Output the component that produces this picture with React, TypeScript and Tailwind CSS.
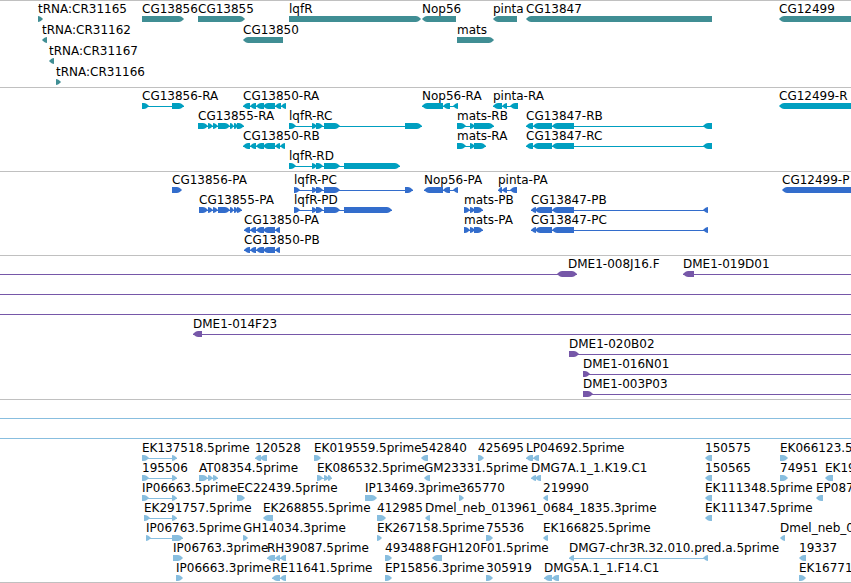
type Strand = '+' | '-' | 'both';

// [start, end] of a block on the contig axis
type Block = [number, number];

type Feature = {
  name?: string;
  labelAt?: number;
  strand: Strand;
  blocks: Block[];
  line?: Block;
};

type Track = {
  id: string;
  color: string;
  rows: Feature[][];
  className: string;
};

// Past both window edges, for features that run out of view
const MIN = -20;
const MAX = 4000;

const fwd = (name: string, ...blocks: Block[]): Feature => ({ name, strand: '+', blocks });
const rev = (name: string, ...blocks: Block[]): Feature => ({ name, strand: '-', blocks });
const span: Feature = { strand: '+', blocks: [], line: [MIN, MAX] };

const LQFR_EXONS: Block[] = [[312, 317], [316, 323], [324, 340]];
const CG13850_EXONS: Block[] = [[250, 256], [256, 264], [263, 275]];
const CG13855_EXONS: Block[] = [[208, 213], [213, 218], [218, 230], [230, 234], [234, 238]];

const genes: Feature[][] = [
  [
    fwd('tRNA:CR31165', [38, 43]),
    fwd('CG13856', [142, 184]),
    fwd('CG13855', [198, 245]),
    fwd('lqfR', [289, 421]),
    rev('Nop56', [422, 456]),
    rev('pinta', [493, 517]),
    rev('CG13847', [526, 712]),
    rev('CG12499', [779, MAX]),
  ],
  [
    rev('tRNA:CR31162', [42, 47]),
    rev('CG13850', [243, 283]),
    fwd('mats', [457, 494]),
  ],
  [rev('tRNA:CR31167', [49, 54])],
  [fwd('tRNA:CR31166', [56, 61])],
];

const transcripts: Feature[][] = [
  [
    fwd('CG13856-RA', [142, 149], [172, 184]),
    rev('CG13850-RA', [243, 250], ...CG13850_EXONS, [275, 281], [281, 286]),
    rev('Nop56-RA', [422, 443], [443, 450], [453, 458]),
    rev('pinta-RA', [493, 502], [502, 507], [510, 518]),
    rev('CG12499-R', [779, MAX]),
  ],
  [
    fwd('CG13855-RA', [198, 208], ...CG13855_EXONS, [237, 244]),
    fwd('lqfR-RC', [289, 296], ...LQFR_EXONS, [405, 422]),
    fwd('mats-RB', [457, 466], [470, 475], [474, 494]),
    rev('CG13847-RB', [526, 533], [533, 552], [552, 574], [703, 712]),
  ],
  [
    rev('CG13850-RB', [243, 250], ...CG13850_EXONS, [275, 280], [280, 285]),
    fwd('mats-RA', [457, 466], [470, 475], [474, 486]),
    rev('CG13847-RC', [526, 533], [533, 552], [552, 574], [703, 712]),
  ],
  [fwd('lqfR-RD', [289, 296], ...LQFR_EXONS, [344, 400])],
];

const proteins: Feature[][] = [
  [
    fwd('CG13856-PA', [172, 182]),
    fwd('lqfR-PC', [294, 300], ...LQFR_EXONS, [405, 413]),
    rev('Nop56-PA', [424, 443], [443, 450], [453, 458]),
    rev('pinta-PA', [498, 502], [502, 507], [510, 517]),
    rev('CG12499-P', [782, MAX]),
  ],
  [
    fwd('CG13855-PA', [199, 208], ...CG13855_EXONS, [237, 242]),
    fwd('lqfR-PD', [294, 300], ...LQFR_EXONS, [344, 392]),
    fwd('mats-PB', [464, 470], [470, 475], [474, 483]),
    rev('CG13847-PB', [531, 536], [535, 552], [552, 574], [703, 708]),
  ],
  [
    rev('CG13850-PA', [244, 250], ...CG13850_EXONS, [275, 280]),
    fwd('mats-PA', [464, 470], [470, 475], [474, 483]),
    rev('CG13847-PC', [531, 536], [535, 552], [552, 574], [703, 708]),
  ],
  [rev('CG13850-PB', [244, 250], ...CG13850_EXONS, [275, 280])],
];

const bacEnds: Feature[][] = [
  [
    { name: 'DME1-008J16.F', labelAt: 568, strand: 'both', blocks: [[557, 577]], line: [MIN, 577] },
    { name: 'DME1-019D01', strand: '-', blocks: [[683, 694]], line: [683, MAX] },
  ],
  [span],
  [span],
  [{ name: 'DME1-014F23', strand: '-', blocks: [[193, 202]], line: [193, MAX] }],
  [{ name: 'DME1-020B02', strand: '+', blocks: [[569, 579]], line: [569, MAX] }],
  [{ name: 'DME1-016N01', strand: '+', blocks: [[583, 590]], line: [583, MAX] }],
  [{ name: 'DME1-003P03', strand: '+', blocks: [[583, 593]], line: [583, MAX] }],
];

const ests: Feature[][] = [
  [span],
  [span],
  [
    fwd('EK137518.5prime', [142, 149], [172, 177]),
    rev('120528', [255, 261], [260, 267]),
    fwd('EK019559.5prime', [314, 321]),
    rev('542840', [421, 428]),
    fwd('425695', [478, 484]),
    rev('LP04692.5prime', [526, 533], [533, 539]),
    rev('150575', [705, 712]),
    fwd('EK066123.5', [780, 788]),
  ],
  [
    fwd('195506', [142, 149], [172, 177]),
    fwd('AT08354.5prime', [199, 208], [208, 213], [213, 218]),
    fwd('EK086532.5prime', [317, 323], [324, 329], [328, 332]),
    rev('GM23331.5prime', [424, 430]),
    rev('DMG7A.1_1.K19.C1', [531, 536], [535, 541]),
    rev('150565', [705, 712]),
    fwd('74951', [780, 788]),
    rev('EK19', [825, 833]),
  ],
  [
    fwd('IP06663.5prime', [142, 149], [172, 177]),
    fwd('EC22439.5prime', [237, 245]),
    fwd('IP13469.3prime', [365, 377]),
    fwd('365770', [459, 464]),
    rev('219990', [543, 548]),
    rev('EK111348.5prime', [705, 712]),
    rev('EP087', [816, 823]),
  ],
  [
    fwd('EK291757.5prime', [144, 150], [172, 177]),
    rev('EK268855.5prime', [263, 273]),
    fwd('412985', [377, 386]),
    rev('Dmel_neb_013961_0684_1835.3prime', [425, 430]),
    rev('EK111347.5prime', [705, 712]),
  ],
  [
    fwd('IP06763.5prime', [146, 151], [172, 183]),
    fwd('GH14034.3prime', [243, 248]),
    fwd('EK267158.5prime', [377, 382]),
    fwd('75536', [486, 493]),
    rev('EK166825.5prime', [543, 548]),
    rev('Dmel_neb_0', [780, 785]),
  ],
  [
    fwd('IP06763.3prime', [173, 183]),
    rev('RH39087.5prime', [267, 275], [275, 280], [280, 286]),
    fwd('493488', [385, 392]),
    rev('FGH120F01.5prime', [432, 442]),
    rev('DMG7-chr3R.32.010.pred.a.5prime', [569, 574], [703, 708]),
    rev('19337', [799, 806]),
  ],
  [
    fwd('IP06663.3prime', [176, 183]),
    rev('RE11641.5prime', [272, 280], [280, 286]),
    fwd('EP15856.3prime', [385, 392]),
    fwd('305919', [486, 493]),
    rev('DMG5A.1_1.F14.C1', [544, 552], [552, 559]),
    fwd('EK16771', [799, 806]),
  ],
];

const tracks: Track[] = [
  { id: 'genes', color: '#408e94', rows: genes, className: 'gap-px pb-0.5' },
  { id: 'transcripts', color: '#009fc0', rows: transcripts, className: 'pb-0.5' },
  { id: 'proteins', color: '#336dcc', rows: proteins, className: 'pb-0.5' },
  { id: 'bac-ends', color: '#7657a8', rows: bacEnds, className: 'pb-0.5' },
  { id: 'ests', color: '#88bedf', rows: ests, className: 'border-b pb-px' },
];

// A block with a rounded-off head on the side it is read towards
function blockPoints([x1, x2]: Block, strand: Strand) {
  const head = Math.min(5, x2 - x1);
  const right = `${x2 - head},0 ${x2 - head + 2},0.5 ${x2 - 1},2 ${x2},3 ${x2 - 1},4 ${x2 - head + 2},5.5 ${x2 - head},6`;
  const left = `${x1 + head},6 ${x1 + head - 2},5.5 ${x1 + 1},4 ${x1},3 ${x1 + 1},2 ${x1 + head - 2},0.5 ${x1 + head},0`;

  if (strand === '+') return `${x1},0 ${right} ${x1},6`;
  if (strand === '-') return `${x2},0 ${x2},6 ${left}`;
  return `${right} ${left}`;
}

function FeatureGlyph({ feature }: { feature: Feature }) {
  const { blocks, strand } = feature;
  const [from, to] = feature.line ?? [blocks[0][0], blocks[blocks.length - 1][1]];

  return (
    <g>
      {(feature.line || blocks.length > 1) && (
        <rect x={from} y={3} width={to - from} height={1} shapeRendering="crispEdges" />
      )}
      {blocks.map((block) => (
        <polygon key={block[0]} points={blockPoints(block, strand)} />
      ))}
    </g>
  );
}

function TrackRow({ features, color }: { features: Feature[]; color: string }) {
  return (
    <div>
      <div className="relative h-3.5">
        {features.map((f) =>
          f.name ? (
            <span
              key={f.name}
              className="absolute top-0 whitespace-nowrap"
              style={{ left: f.labelAt ?? f.blocks[0][0] }}
            >
              {f.name}
            </span>
          ) : null
        )}
      </div>
      <svg className="block h-1.5 w-full" fill={color} aria-hidden="true">
        {features.map((f, i) => (
          <FeatureGlyph key={i} feature={f} />
        ))}
      </svg>
    </div>
  );
}

export default function App() {
  return (
    <main className="overflow-hidden bg-white font-['DejaVu_Sans',sans-serif] text-[12px] leading-[14px] text-black">
      {tracks.map((track) => (
        <section
          key={track.id}
          className={`flex flex-col border-t border-[#c0c0c0] pt-px ${track.className}`}
        >
          {track.rows.map((features, i) => (
            <TrackRow key={i} features={features} color={track.color} />
          ))}
        </section>
      ))}
    </main>
  );
}
